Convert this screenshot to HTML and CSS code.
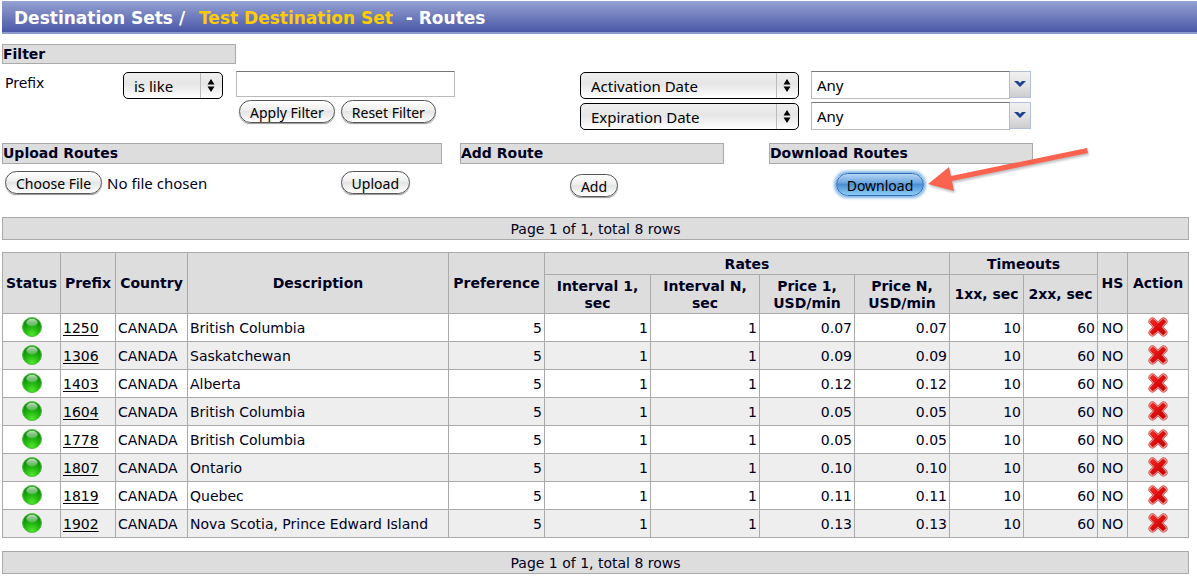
FILE: index.html
```
<!DOCTYPE html>
<html lang="en">
<head>
    <meta charset="UTF-8">
    <title>Destination Sets - Routes</title>
    <link rel="stylesheet" href="styles.css">
</head>
<body>

    <svg class="defs" width="0" height="0" aria-hidden="true">
        <defs>
            <radialGradient id="ballBase" cx="0.5" cy="0.9" r="0.9">
                <stop offset="0" stop-color="#4fe52c"/>
                <stop offset="0.45" stop-color="#22b512"/>
                <stop offset="0.8" stop-color="#158a10"/>
                <stop offset="1" stop-color="#2f9a2a"/>
            </radialGradient>
            <linearGradient id="ballShine" x1="0" y1="0" x2="0" y2="1">
                <stop offset="0" stop-color="#fff" stop-opacity="0.7"/>
                <stop offset="1" stop-color="#fff" stop-opacity="0.2"/>
            </linearGradient>
            <linearGradient id="crossFill" x1="0" y1="0" x2="1" y2="1">
                <stop offset="0" stop-color="#ff2a22"/>
                <stop offset="0.5" stop-color="#de0d0d"/>
                <stop offset="1" stop-color="#b80000"/>
            </linearGradient>
            <symbol id="ball" viewBox="0 0 20 20">
                <circle cx="10" cy="10" r="9.5" fill="url(#ballBase)" stroke="#4cc23c"/>
                <ellipse cx="10" cy="5.6" rx="5.6" ry="3.8" fill="url(#ballShine)"/>
            </symbol>
            <symbol id="cross" viewBox="0 0 20 20">
                <path d="M4.500 4.500L15.500 15.500M15.500 4.500L4.500 15.500" stroke="#cf5a58" stroke-width="8" stroke-linecap="round"/>
                <path d="M4.500 4.500L15.500 15.500M15.500 4.500L4.500 15.500" stroke="#ee8f8c" stroke-width="6.600" stroke-linecap="round"/>
                <path d="M4.800 2.300L10 6.700L15.200 2.300L17.700 4.800L13.300 10L17.700 15.200L15.200 17.700L10 13.300L4.800 17.700L2.300 15.200L6.700 10L2.300 4.800Z" fill="url(#crossFill)" stroke="#d01212" stroke-width="0.800" stroke-linejoin="round"/>
            </symbol>
        </defs>
    </svg>

    <h1 class="title-bar">Destination Sets / <span class="set-name">Test Destination Set</span> - Routes</h1>

    <main>
        <h2 class="section-title filter-title">Filter</h2>
        <form class="filter">
            <label class="filter-label" for="prefix">Prefix</label>
            <select class="popup popup-small" aria-label="Prefix condition">
                <option>is like</option>
            </select>
            <div class="prefix-box">
                <input class="field" id="prefix" type="text">
                <div class="filter-buttons">
                    <button class="pill" type="button">Apply Filter</button>
                    <button class="pill" type="reset">Reset Filter</button>
                </div>
            </div>
            <div class="dates">
                <div class="date-row">
                    <select class="popup" aria-label="First date type">
                        <option>Activation Date</option>
                    </select>
                    <div class="combo">
                        <input class="field" type="text" value="Any" aria-label="Activation date">
                        <button class="combo-button" type="button" aria-label="Show dates">
                            <svg width="14" height="8" viewBox="0 0 14 8"><path d="M1 1H5L7 3L9 1H13L7 7Z" fill="#1f3f8f"/></svg>
                        </button>
                    </div>
                </div>
                <div class="date-row">
                    <select class="popup" aria-label="Second date type">
                        <option>Expiration Date</option>
                    </select>
                    <div class="combo">
                        <input class="field" type="text" value="Any" aria-label="Expiration date">
                        <button class="combo-button" type="button" aria-label="Show dates">
                            <svg width="14" height="8" viewBox="0 0 14 8"><path d="M1 1H5L7 3L9 1H13L7 7Z" fill="#1f3f8f"/></svg>
                        </button>
                    </div>
                </div>
            </div>
        </form>

        <div class="tools">
            <section class="tool upload">
                <h2 class="section-title">Upload Routes</h2>
                <div class="tool-body">
                    <input class="file" type="file" aria-label="Routes file">
                    <button class="pill" type="button">Upload</button>
                </div>
            </section>
            <section class="tool add">
                <h2 class="section-title">Add Route</h2>
                <div class="tool-body">
                    <button class="pill" type="button">Add</button>
                </div>
            </section>
            <section class="tool download">
                <h2 class="section-title">Download Routes</h2>
                <div class="tool-body">
                    <button class="pill pill-active" type="button">Download</button>
                </div>
                <svg class="pointer" width="168" height="52" viewBox="0 0 168 52" aria-hidden="true">
                    <path d="M3 39L24 22L26 31L162 3L163 8L27 36L29 46Z" fill="#fb6350"/>
                </svg>
            </section>
        </div>

        <div class="pager">Page 1 of 1, total 8 rows</div>

        <table class="routes">
            <colgroup>
                <col class="c-status">
                <col class="c-prefix">
                <col class="c-country">
                <col>
                <col class="c-pref">
                <col class="c-int1">
                <col class="c-intn">
                <col class="c-price">
                <col class="c-price">
                <col class="c-timeout">
                <col class="c-timeout">
                <col class="c-hs">
                <col class="c-action">
            </colgroup>
            <thead>
                <tr>
                    <th rowspan="2">Status</th>
                    <th rowspan="2">Prefix</th>
                    <th rowspan="2">Country</th>
                    <th rowspan="2">Description</th>
                    <th rowspan="2">Preference</th>
                    <th colspan="4">Rates</th>
                    <th colspan="2">Timeouts</th>
                    <th rowspan="2">HS</th>
                    <th rowspan="2">Action</th>
                </tr>
                <tr class="sub">
                    <th>Interval 1,<br>sec</th>
                    <th>Interval N,<br>sec</th>
                    <th>Price 1,<br>USD/min</th>
                    <th>Price N,<br>USD/min</th>
                    <th>1xx, sec</th>
                    <th>2xx, sec</th>
                </tr>
            </thead>
            <tbody id="rows"></tbody>
        </table>

        <div class="pager">Page 1 of 1, total 8 rows</div>
    </main>

    <script>
        const routes = [
            ['1250', 'British Columbia', '0.07'],
            ['1306', 'Saskatchewan', '0.09'],
            ['1403', 'Alberta', '0.12'],
            ['1604', 'British Columbia', '0.05'],
            ['1778', 'British Columbia', '0.05'],
            ['1807', 'Ontario', '0.10'],
            ['1819', 'Quebec', '0.11'],
            ['1902', 'Nova Scotia, Prince Edward Island', '0.13']
        ];

        document.getElementById('rows').innerHTML = routes.map(([prefix, description, price]) => `
            <tr>
                <td class="icon"><svg width="20" height="20" role="img" aria-label="Active"><use href="#ball"/></svg></td>
                <td><a href="#${prefix}">${prefix}</a></td>
                <td>CANADA</td>
                <td>${description}</td>
                <td class="num">5</td>
                <td class="num">1</td>
                <td class="num">1</td>
                <td class="num">${price}</td>
                <td class="num">${price}</td>
                <td class="num">10</td>
                <td class="num">60</td>
                <td class="hs">NO</td>
                <td class="icon"><button class="delete" type="button" aria-label="Delete ${prefix}"><svg width="20" height="20"><use href="#cross"/></svg></button></td>
            </tr>`).join('');
    </script>
</body>
</html>
```
FILE: styles.css
```
* {
    box-sizing: border-box;
}

body {
    margin: 0;
    padding: 1px 0 0 2px;
    font-family: Verdana, "DejaVu Sans", sans-serif;
    font-size: 14px;
    line-height: 17px;
    color: #000022;
    background-color: #fff;
}

.defs {
    position: absolute;
}

.title-bar {
    margin: 0;
    padding: 0 12px;
    height: 33px;
    font-size: 17px;
    line-height: 34px;
    white-space: pre;
    color: #fff;
    background: linear-gradient(#95a2d1, #4a57a8);
    border-bottom: 2px solid #8d99cf;
}

.set-name {
    margin: 0 7px 0 8px;
    color: #fc0;
}

main {
    padding: 10px 8px 0 0;
}

.section-title {
    margin: 0;
    height: 21px;
    font-size: 14px;
    line-height: 18px;
    background-color: #ddd;
    border: 1px solid #aaa;
}

.filter-title {
    width: 234px;
    height: 20px;
}

/* filter */
.filter {
    display: flex;
    align-items: flex-start;
    padding-top: 7px;
    height: 79px;
}

.filter-label {
    width: 121px;
    padding: 4px 3px 0;
}

.popup {
    appearance: none;
    width: 219px;
    height: 27px;
    margin: 0;
    padding: 0 30px 0 10px;
    font-family: "Lucida Grande", "Noto Sans", sans-serif;
    font-size: 15px;
    color: #000;
    border: 1px solid #000;
    border-radius: 5px;
    background:
        url("data:image/svg+xml,%3Csvg xmlns='http://www.w3.org/2000/svg' width='22' height='25'%3E%3Cpath d='M.5 0V25' stroke='%23bbb'/%3E%3Cpath d='M11 6l3.500 5.500h-7zM11 19l3.500-5.500h-7z'/%3E%3C/svg%3E") right center no-repeat,
        linear-gradient(#eee, #e6e6e6 45%, #fff);
}

.popup-small {
    width: 100px;
}

.filter > .popup {
    margin: 1px 13px 0 0;
}

.field {
    width: 219px;
    height: 26px;
    margin: 0;
    padding: 0 5px;
    font-family: "Lucida Grande", "Noto Sans", sans-serif;
    font-size: 15px;
    color: #000;
    background-color: #fff;
    border: 1px solid #bbb;
    border-top: 1px solid #777;
    border-radius: 0;
}

.filter-buttons {
    display: flex;
    gap: 6px;
    padding: 3px 0 0 3px;
}

.dates {
    display: flex;
    flex-direction: column;
    gap: 3px;
    margin-left: 125px;
}

.date-row {
    display: flex;
    align-items: flex-end;
    gap: 12px;
}

.combo {
    display: flex;
    align-items: flex-start;
    height: 28px;
}

.combo .field {
    width: 199px;
    height: 28px;
}

.combo-button {
    display: flex;
    align-items: center;
    justify-content: center;
    width: 21px;
    height: 27px;
    padding: 0 0 2px;
    border: 1px solid #b4bfdb;
    border-left: none;
    background: linear-gradient(#f0f0f0, #e4e4e6 50%, #cdcdd1);
}

/* buttons */
.pill,
.file::file-selector-button {
    height: 23px;
    margin: 0;
    padding: 2px 10px 0;
    font-family: "Lucida Grande", "Noto Sans", sans-serif;
    font-size: 14px;
    line-height: 18px;
    color: #000;
    border: 1px solid #555;
    border-radius: 12px;
    background: linear-gradient(#fff, #eee 45%, #e4e4e4 50%, #fff);
    box-shadow: 0 1px 1px #999;
}

.pill-active {
    border-color: #2f6bb5;
    background: linear-gradient(#b5d5f3, #6fa9e0 40%, #4c8fd2 50%, #8ccdf7);
    box-shadow: 0 0 3px 2px #7db3e6;
}

/* upload / add / download */
.tools {
    display: grid;
    grid-template-columns: 458fr 309fr 420fr;
}

.upload {
    width: 440px;
}

.add,
.download {
    width: 264px;
}

.download {
    position: relative;
}

.tool-body {
    display: flex;
    justify-content: center;
    padding: 10px 0 0 4px;
    height: 53px;
}

.upload .tool-body {
    justify-content: space-between;
    padding: 7px 32px 0 3px;
}

.download .tool-body {
    padding: 9px 42px 0 0;
}

.file {
    height: 25px;
    width: 300px;
    font-family: "Lucida Grande", "Noto Sans", sans-serif;
    font-size: 15px;
    color: #000022;
}

.file::file-selector-button {
    margin-right: 5px;
}

.pointer {
    position: absolute;
    left: 156px;
    top: 2px;
    filter: drop-shadow(1px 2px 1px rgba(0, 0, 0, 0.25));
}

/* routes */
.pager {
    height: 23px;
    line-height: 22px;
    text-align: center;
    background-color: #ddd;
    border: 1px solid #aaa;
}

.routes {
    width: 100%;
    margin: 12px 0 13px;
    table-layout: fixed;
    border-collapse: collapse;
}

.routes th,
.routes td {
    padding: 1px 2px 0;
    border: 1px solid #aaa;
}

.routes th {
    height: 22px;
    padding: 1px 0 0;
    background-color: #ddd;
}

.routes .sub th {
    height: 39px;
}

.routes td {
    height: 28px;
}

.routes tbody tr:nth-child(even) {
    background-color: #eee;
}

.routes a {
    color: #000;
    text-underline-offset: 2px;
}

.routes .num {
    text-align: right;
}

.routes .hs {
    padding: 1px 0 0;
    text-align: center;
}

.routes .icon {
    padding: 0 0 2px;
}

.icon svg {
    display: block;
    margin: 0 auto;
}

.delete {
    display: block;
    margin: 0 auto;
    padding: 0;
    border: none;
    background: none;
}

.c-status { width: 58px; }
.c-prefix { width: 55px; }
.c-country { width: 72px; }
.c-pref { width: 96px; }
.c-int1 { width: 106px; }
.c-intn { width: 109px; }
.c-price { width: 95px; }
.c-timeout { width: 74px; }
.c-hs { width: 30px; }
.c-action { width: 61px; }
```
